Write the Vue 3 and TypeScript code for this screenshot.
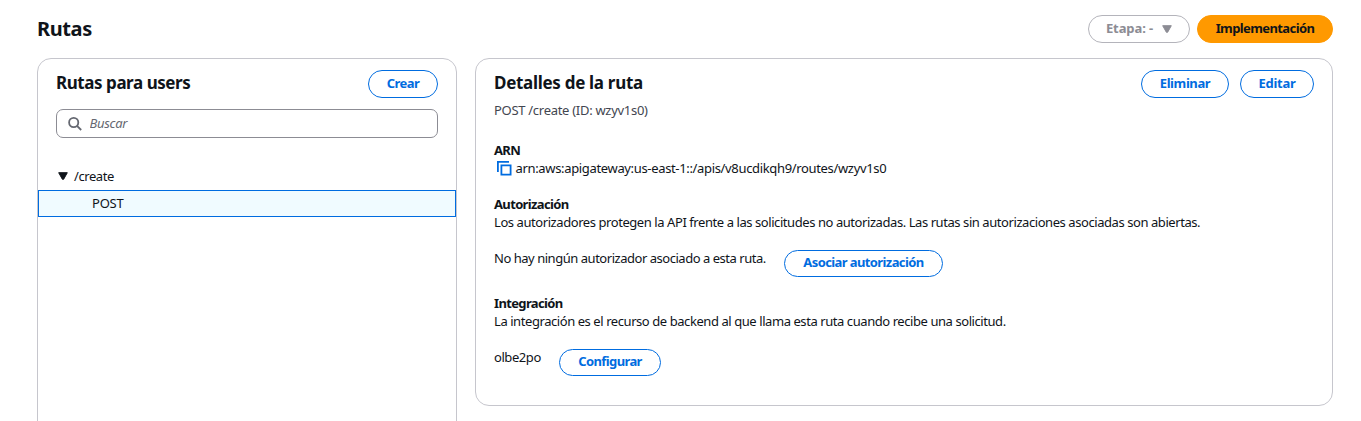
<script setup lang="ts">
import { ref } from 'vue'

interface RouteMethod {
  name: string
}

const search = ref('')
const methods: RouteMethod[] = [{ name: 'POST' }]
const selected = ref('POST')
</script>

<template>
  <main class="page">
    <header class="topbar">
      <h1 class="title">Rutas</h1>
      <div class="actions">
        <button class="btn stage" disabled>
          <span>Etapa: -</span>
          <svg width="10" height="8" viewBox="0 0 10 8"><path d="M.7.7h8.6L5.6 7.3H4.4z" fill="#8c8c94" stroke="#8c8c94" stroke-width="1" stroke-linejoin="round" /></svg>
        </button>
        <button class="btn deploy">Implementación</button>
      </div>
    </header>

    <div class="columns">
      <section class="panel routes">
        <div class="panel-head">
          <h2 class="routes-title">Rutas para users</h2>
          <button class="btn create">Crear</button>
        </div>
        <label class="search">
          <svg width="14" height="14" viewBox="0 0 14 14" fill="none" stroke="#656871" stroke-width="1.8"><circle cx="5.7" cy="5.5" r="4.6" /><path d="M9 8.8l4.2 4.2" /></svg>
          <input v-model="search" placeholder="Buscar" />
        </label>
        <div class="tree">
          <div class="node">
            <svg width="10" height="8" viewBox="0 0 10 8"><path d="M.7.7h8.6L5.6 7.3H4.4z" fill="#0f141a" stroke="#0f141a" stroke-linejoin="round" /></svg>
            <span>/create</span>
          </div>
          <div
            v-for="m in methods"
            :key="m.name"
            class="method"
            :class="{ active: m.name === selected }"
            @click="selected = m.name"
          >
            <span>{{ m.name }}</span>
          </div>
        </div>
      </section>

      <section class="panel details">
        <div class="panel-head">
          <h2 class="details-title">Detalles de la ruta</h2>
          <div class="head-actions">
            <button class="btn remove">Eliminar</button>
            <button class="btn edit">Editar</button>
          </div>
        </div>
        <p class="sub">POST /create (ID: wzyv1s0)</p>

        <div class="arn">
          <h3>ARN</h3>
          <div class="arn-value">
            <svg width="15" height="15" viewBox="0 0 15 15" fill="none" stroke="#006ce0" stroke-width="1.8"><path d="M.9 11V.9H12" /><path d="M4.4 4.4h9.2v9.2H4.4z" /></svg>
            <span>arn:aws:apigateway:us-east-1::/apis/v8ucdikqh9/routes/wzyv1s0</span>
          </div>
        </div>

        <div class="auth">
          <h3>Autorización</h3>
          <p>Los autorizadores protegen la API frente a las solicitudes no autorizadas. Las rutas sin autorizaciones asociadas son abiertas.</p>
          <div class="line">
            <span class="auth-cell">No hay ningún autorizador asociado a esta ruta.</span>
            <button class="btn low attach">Asociar autorización</button>
          </div>
        </div>

        <div class="integ">
          <h3>Integración</h3>
          <p>La integración es el recurso de backend al que llama esta ruta cuando recibe una solicitud.</p>
          <div class="line">
            <span class="int-cell">olbe2po</span>
            <button class="btn low config">Configurar</button>
          </div>
        </div>
      </section>
    </div>
  </main>
</template>

<style>
body { margin: 0; background: #fff; overflow: hidden; }
</style>

<style scoped>
* { box-sizing: border-box; }
.page {
  height: 421px;
  overflow: hidden;
  padding: 15px 28px 0 37px;
  font: 13px/18px "Noto Sans", "Open Sans", sans-serif;
  letter-spacing: -0.43px;
  color: #0f141a;
  white-space: nowrap;
}
h1, h2, h3, p { margin: 0; }
h3 { font-size: 13px; line-height: 18px; font-weight: 700; letter-spacing: -0.65px; }
h2 { font-size: 17px; line-height: 26px; font-weight: 700; }
.routes-title { letter-spacing: -0.44px; }
.details-title { letter-spacing: -0.3px; }
.topbar { display: flex; justify-content: space-between; height: 43px; }
.title { font-size: 20px; line-height: 27px; font-weight: 700; letter-spacing: -0.4px; }
.actions { display: flex; gap: 7px; }
.btn {
  display: flex;
  align-items: center;
  justify-content: center;
  height: 28px;
  padding: 0 0 2px;
  border: 1px solid #006ce0;
  border-radius: 14px;
  background: #fff;
  color: #006ce0;
  font: 700 13px/18px "Noto Sans", "Open Sans", sans-serif;
  letter-spacing: -0.6px;
}
.low { height: 27px; margin-top: 1px; padding-bottom: 3px; }
.stage { width: 102px; gap: 9px; border-color: #b4b4bb; color: #8c8c94; letter-spacing: -0.1px; }
.stage svg { position: relative; top: 1px; }
.deploy { width: 136px; border-color: #ff9900; background: #ff9900; color: #0f141a; }
.create { width: 70px; }
.remove { width: 88px; letter-spacing: -0.4px; }
.edit { width: 74px; letter-spacing: -0.3px; }
.attach { width: 159px; }
.config { width: 102px; }

.columns { display: flex; gap: 18px; align-items: flex-start; }
.panel { border: 1px solid #c6c6cd; border-radius: 14px; }
.routes { width: 420px; height: 400px; padding-top: 11px; }
.details { width: 858px; height: 348px; padding: 11px 18px 0; }
.panel-head { display: flex; justify-content: space-between; height: 28px; }
.routes .panel-head { margin: 0 18px; }
.head-actions { display: flex; gap: 11px; }
.search {
  display: flex;
  align-items: center;
  gap: 7.5px;
  height: 29px;
  margin: 11px 18px 0;
  padding: 0 11px;
  border: 1px solid #8c8c94;
  border-radius: 7px;
}
.search input {
  flex: 1;
  padding: 0 0 2px;
  border: 0;
  outline: 0;
  background: none;
  font: 13px/18px "Noto Sans", sans-serif;
}
.search input::placeholder { color: #656871; font-style: italic; opacity: 1; letter-spacing: -0.3px; }
.tree { margin-top: 25px; }
.node { display: flex; align-items: center; gap: 6px; height: 27px; padding-left: 20px; }
.node span { padding-bottom: 2px; }
.node svg { margin-top: -1px; }
.method { display: flex; align-items: center; height: 27px; padding: 0 0 2px 53px; border: 1px solid transparent; letter-spacing: -0.2px; }
.method.active { border-color: #006ce0; background: #f0fbff; }

.sub { margin-top: 3px; color: #424650; letter-spacing: -0.29px; }
.arn { margin-top: 22px; }
.arn-value { display: flex; align-items: center; gap: 3.5px; height: 18px; padding-left: 3px; letter-spacing: -0.34px; }
.auth { margin-top: 18px; }
.integ { margin-top: 17px; }
.line { display: flex; align-items: flex-start; margin-top: 18px; }
.auth-cell { width: 290px; letter-spacing: -0.47px; }
.int-cell { width: 65px; }
</style>
